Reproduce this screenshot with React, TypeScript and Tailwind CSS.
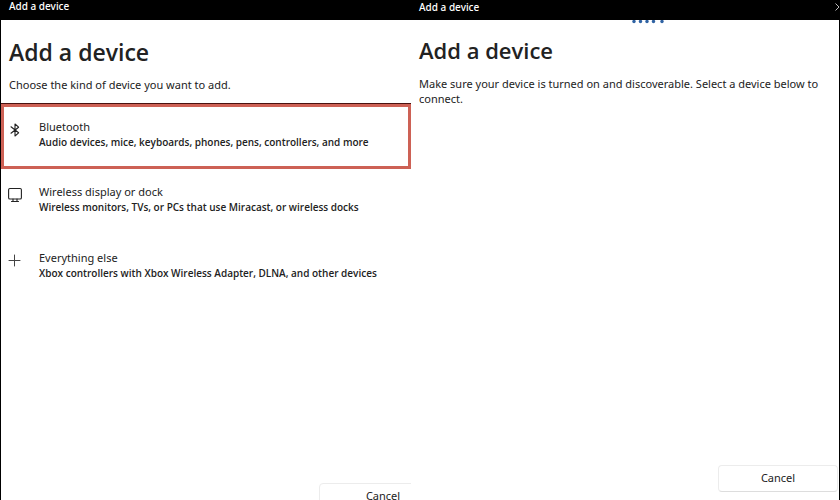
import React from "react";

type Kind = {
  title: string;
  detail: string;
  icon: React.ReactNode;
  highlighted?: boolean;
};

const BluetoothIcon = () => (
  <svg width="14" height="16" viewBox="0 0 14 16" fill="none" stroke="#222" strokeWidth="1.1" aria-hidden="true">
    <path d="M3 4.8 10.6 10.8 7 14V2L10.6 5.2 3 11.2" strokeLinejoin="round" strokeLinecap="round" />
  </svg>
);

const DisplayIcon = () => (
  <svg width="14" height="16" viewBox="0 0 14 16" fill="none" stroke="#222" strokeWidth="1.1" aria-hidden="true">
    <rect x="0.6" y="1.5" width="12.8" height="10.5" rx="1.3" />
    <path d="M5 12V14.5M9 12V14.5M3.5 14.5H10.5" strokeLinecap="round" />
  </svg>
);

const PlusIcon = () => (
  <svg width="14" height="16" viewBox="0 0 14 16" fill="none" stroke="#444" aria-hidden="true">
    <path d="M6.5 2V13M1 7.5H12" strokeLinecap="round" />
  </svg>
);

const kinds: Kind[] = [
  {
    title: "Bluetooth",
    detail: "Audio devices, mice, keyboards, phones, pens, controllers, and more",
    icon: <BluetoothIcon />,
    highlighted: true,
  },
  {
    title: "Wireless display or dock",
    detail: "Wireless monitors, TVs, or PCs that use Miracast, or wireless docks",
    icon: <DisplayIcon />,
  },
  {
    title: "Everything else",
    detail: "Xbox controllers with Xbox Wireless Adapter, DLNA, and other devices",
    icon: <PlusIcon />,
  },
];

const KindRow = ({ kind }: { kind: Kind }) => (
  <button
    type="button"
    className={`flex w-full items-start gap-[17px] border-[3px] pt-3 pl-1 text-left ${
      kind.highlighted ? "h-[65px] border-[#cd6155] shadow-[0_-1px_0_#4a1210]" : "h-[66px] border-transparent"
    }`}
  >
    <span className="mt-[3px] shrink-0">{kind.icon}</span>
    <span className="flex flex-col whitespace-nowrap">
      <span className="font-['Noto_Sans',sans-serif] text-[11px] leading-[15px] text-[#222]">{kind.title}</span>
      <span className="text-[10px] leading-4 font-semibold text-[#222]">{kind.detail}</span>
    </span>
  </button>
);

export default function App() {
  return (
    <main className="grid h-screen grid-cols-[411fr_429fr] overflow-hidden border-x border-black bg-white font-['Open_Sans','Noto_Sans',sans-serif] text-[#222]">
      <section className="flex min-w-0 flex-col overflow-hidden">
        <header className="flex h-5 shrink-0 items-start bg-black px-2 font-['Noto_Sans',sans-serif] text-[10px] leading-[13px] font-medium text-white">
          Add a device
        </header>
        <h1 className="mt-4 px-2 text-[23px] leading-8 font-semibold">Add a device</h1>
        <p className="mt-2 px-2 font-['Noto_Sans',sans-serif] text-[11px] leading-[18px]">
          Choose the kind of device you want to add.
        </p>
        <div className="mt-[10px] shrink-0">
          {kinds.map((kind) => (
            <KindRow key={kind.title} kind={kind} />
          ))}
        </div>
        <button
          type="button"
          className="mt-auto -mr-9 -mb-[10px] h-[27px] w-32 shrink-0 self-end rounded border border-[#ececec] font-['Noto_Sans',sans-serif] text-[11px]"
        >
          Cancel
        </button>
      </section>

      <section className="flex min-w-0 flex-col overflow-hidden">
        <header className="flex h-5 shrink-0 items-start justify-between bg-black pl-2 font-['Noto_Sans',sans-serif] text-[10px] leading-[14px] font-medium text-white">
          Add a device
          <button type="button" aria-label="Close" className="-mr-1 mt-[3px]">
            <svg width="8" height="8" viewBox="0 0 8 8" fill="none" stroke="#bbb" aria-hidden="true">
              <path d="M0.5 0.5 7.5 7.5M7.5 0.5 0.5 7.5" />
            </svg>
          </button>
        </header>
        <div className="flex shrink-0 justify-center pl-[46px]">
          <svg width="34" height="4" viewBox="0 0 34 4" fill="#2f62a3" role="progressbar" aria-label="Searching for devices">
            <circle cx="3" cy="1.5" r="1.7" />
            <circle cx="9.5" cy="1.5" r="1.7" />
            <circle cx="16" cy="1.5" r="1.7" />
            <circle cx="22.5" cy="1.5" r="1.7" />
            <circle cx="31" cy="1.5" r="1.7" />
          </svg>
        </div>
        <h1 className="mt-[10px] px-2 text-[22px] leading-8 font-semibold">Add a device</h1>
        <p className="mt-[10px] px-2 font-['Noto_Sans',sans-serif] text-[11px] leading-[15px]">
          Make sure your device is turned on and discoverable. Select a device below to connect.
        </p>
        <button
          type="button"
          className="mt-auto mr-px mb-2 h-[27px] w-[120px] shrink-0 self-end rounded border border-[#ececec] border-b-[#ddd] font-['Noto_Sans',sans-serif] text-[11px]"
        >
          Cancel
        </button>
      </section>
    </main>
  );
}
